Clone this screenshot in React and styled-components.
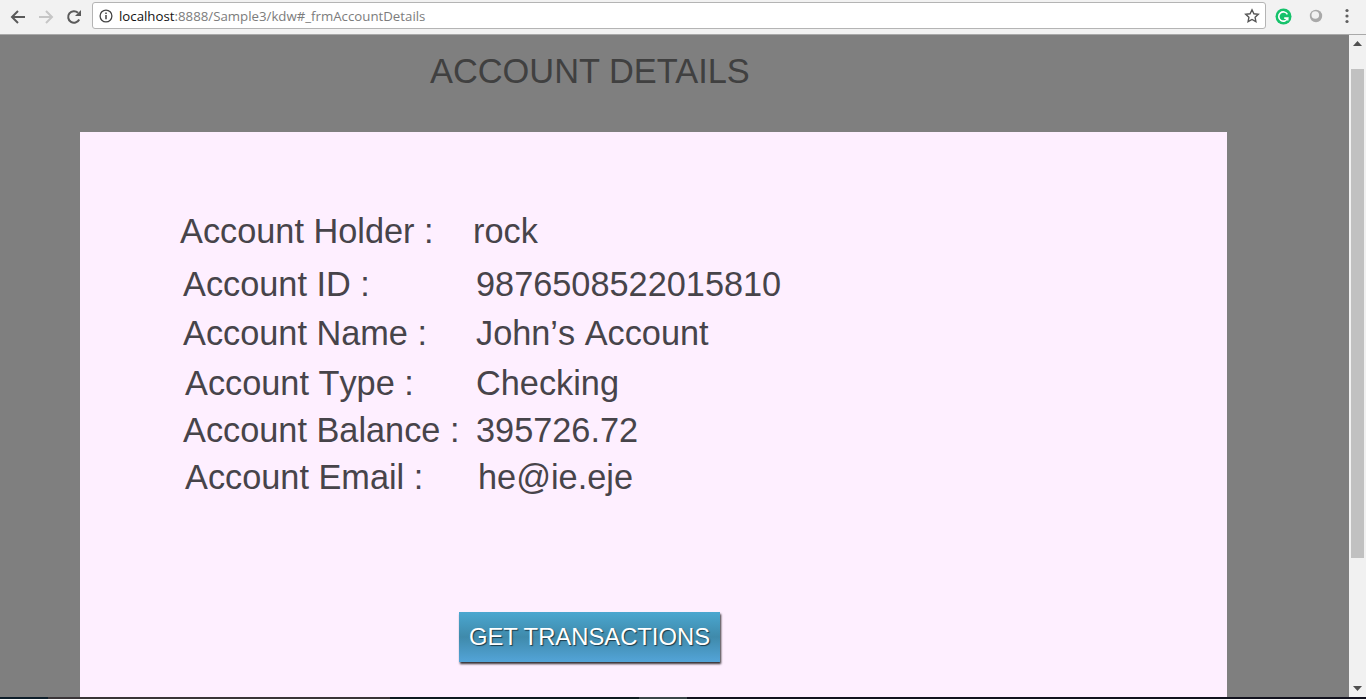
import React from "react";
import styled, { createGlobalStyle } from "styled-components";

const Global = createGlobalStyle`
  html, body { margin: 0; height: 100%; overflow: hidden; }
  body { font-family: "Liberation Sans", Arial, sans-serif; }
  #root { height: 100%; }
`;

const Screen = styled.div`
  width: 1366px;
  height: 699px;
  display: flex;
  flex-direction: column;
  overflow: hidden;
`;

const Toolbar = styled.header`
  height: 34px;
  flex: none;
  display: flex;
  align-items: center;
  background: #f2f2f2;
  border-bottom: 1px solid #a9a9a9;
  padding-left: 4px;
`;

const NavButton = styled.button`
  width: 28px;
  height: 28px;
  flex: none;
  padding: 0;
  border: 0;
  background: none;
  display: flex;
  align-items: center;
  justify-content: center;
`;

const Omnibox = styled.div`
  width: 1174px;
  height: 27px;
  box-sizing: border-box;
  margin-left: 4px;
  margin-top: -3px;
  display: flex;
  align-items: center;
  padding: 0 5px 0 6px;
  background: #fff;
  border: 1px solid #b4b4b4;
  border-radius: 3px;
  font: 13.25px "Open Sans", "Liberation Sans", sans-serif;
`;

const UrlHost = styled.span`
  color: #111;
  margin-left: 6px;
`;

const UrlRest = styled.span`
  color: #7c7c7c;
  flex: 1;
`;

const ExtSlot = styled.div`
  width: ${(p) => p.$w}px;
  flex: none;
  display: flex;
  justify-content: center;
  align-items: center;
  margin-top: -2px;
`;

const Body = styled.div`
  flex: 1;
  min-height: 0;
  display: flex;
`;

const Page = styled.main`
  flex: 1;
  min-width: 0;
  background: #7f7f7f;
  display: flex;
  flex-direction: column;
`;

const Title = styled.h1`
  margin: 0;
  height: 97px;
  box-sizing: border-box;
  padding: 17px 0 0 430px;
  font-size: 34.4px;
  line-height: 39px;
  font-weight: 400;
  color: #404040;
`;

const Card = styled.section`
  flex: 1;
  width: 1147px;
  margin-left: 80px;
  background: #feefff;
  display: flex;
  flex-direction: column;
  padding-top: 80px;
  box-sizing: border-box;
`;

const Row = styled.div`
  height: 38px;
  margin-top: ${(p) => p.$top}px;
  display: flex;
  font-size: 34.3px;
  font-kerning: none;
  line-height: 38px;
  color: #47444a;
  white-space: nowrap;
`;

const Label = styled.span`
  width: ${(p) => 293 - p.$x}px;
  margin-left: ${(p) => 100 + p.$x}px;
`;

const Value = styled.span`
  margin-left: ${(p) => p.$x}px;
`;

const ActionBar = styled.div`
  margin-top: 116px;
  padding-left: 379px;
`;

const ActionButton = styled.button`
  width: 261px;
  height: 50px;
  padding: 0;
  border: 0;
  background: linear-gradient(#4ba7d0 0%, #3f8aab 50%, #53a4d8 100%);
  color: #fff;
  font: 23.8px "Liberation Sans", Arial, sans-serif;
  text-shadow: 1px 1px 1px rgba(0, 0, 0, 0.6);
  box-shadow: 1px 2px 2px rgba(0, 0, 0, 0.8);
`;

const Scrollbar = styled.aside`
  width: 17px;
  flex: none;
  background: #f1f1f1;
  display: flex;
  flex-direction: column;
  align-items: center;
`;

const ScrollArrow = styled.div`
  height: 17px;
  flex: none;
  display: flex;
  align-items: center;
  justify-content: center;
`;

const ScrollThumb = styled.div`
  width: 13px;
  height: 489px;
  flex: none;
  margin-top: 17px;
  background: #c1c1c1;
`;

const ScrollTrack = styled.div`
  flex: 1;
`;

const Strip = styled.footer`
  height: 2px;
  flex: none;
  display: flex;
`;

const StripPart = styled.div`
  width: ${(p) => p.$w}px;
  background: ${(p) => p.$c};
`;

const rows = [
  { top: 0, lx: 0, vx: 0, label: "Account Holder :", value: "rock" },
  { top: 15, lx: 3, vx: 3, label: "Account ID :", value: "9876508522015810" },
  { top: 11, lx: 3, vx: 3, label: "Account Name :", value: "John’s Account" },
  { top: 12, lx: 5, vx: 3, label: "Account Type :", value: "Checking" },
  { top: 9, lx: 3, vx: 3, label: "Account Balance :", value: "395726.72" },
  { top: 9, lx: 5, vx: 5, label: "Account Email :", value: "he@ie.eje" },
];

const strip = [
  [48, "#0e1e2a"],
  [342, "#3a3538"],
  [249, "#0e1a20"],
  [48, "#3a4448"],
  [679, "#12121e"],
];

export default function App() {
  return (
    <Screen>
      <Global />
      <Toolbar>
        <NavButton aria-label="Back">
          <svg width="16" height="16" viewBox="0 0 16 16" fill="none" stroke="#5a5a5a" strokeWidth="2">
            <path d="M15 8H2M8 2 2 8l6 6" />
          </svg>
        </NavButton>
        <NavButton aria-label="Forward">
          <svg width="16" height="16" viewBox="0 0 16 16" fill="none" stroke="#c6c6c6" strokeWidth="2">
            <path d="M1 8h13M8 2l6 6-6 6" />
          </svg>
        </NavButton>
        <NavButton aria-label="Reload">
          <svg width="16" height="16" viewBox="0 0 16 16" fill="none">
            <path d="M13.2 10.5A5.8 5.8 0 1 1 12 3.8" stroke="#5a5a5a" strokeWidth="2" />
            <path d="M15 1v6H9z" fill="#5a5a5a" />
          </svg>
        </NavButton>
        <Omnibox>
          <svg width="14" height="14" viewBox="0 0 14 14" fill="none" stroke="#444" strokeWidth="1.3">
            <circle cx="7" cy="7" r="5.9" />
            <path d="M7 6v4.2M7 3.6v1.3" strokeWidth="1.5" />
          </svg>
          <UrlHost>localhost</UrlHost>
          <UrlRest>:8888/Sample3/kdw#_frmAccountDetails</UrlRest>
          <svg width="16" height="16" viewBox="0 0 16 16" fill="none" stroke="#555" strokeWidth="1.4">
            <path d="M8 1.8l1.9 4 4.4.5-3.2 3 .8 4.4L8 11.5l-3.9 2.2.8-4.4-3.2-3 4.4-.5z" />
          </svg>
        </Omnibox>
        <ExtSlot $w={35}>
          <svg width="17" height="17" viewBox="0 0 17 17" fill="none">
            <circle cx="8.5" cy="8.5" r="8" fill="#15c26b" />
            <path d="M12.4 6.3a4.6 4.6 0 1 0 .3 3.8H9.2" stroke="#fff" strokeWidth="1.6" />
            <path d="M12.8 10.2v2.2" stroke="#fff" strokeWidth="1.4" />
          </svg>
        </ExtSlot>
        <ExtSlot $w={29}>
          <svg width="14" height="14" viewBox="0 0 14 14">
            <circle cx="7" cy="7" r="6.2" fill="#a9a9a9" />
            <circle cx="6.3" cy="6" r="3.8" fill="#f1f1f1" />
          </svg>
        </ExtSlot>
        <ExtSlot $w={34}>
          <svg width="4" height="16" viewBox="0 0 4 16" fill="#5f5f5f">
            <circle cx="2" cy="2.5" r="1.6" />
            <circle cx="2" cy="8" r="1.6" />
            <circle cx="2" cy="13.5" r="1.6" />
          </svg>
        </ExtSlot>
      </Toolbar>
      <Body>
        <Page>
          <Title>ACCOUNT DETAILS</Title>
          <Card>
            {rows.map((r) => (
              <Row key={r.label} $top={r.top}>
                <Label $x={r.lx}>{r.label}</Label>
                <Value $x={r.vx}>{r.value}</Value>
              </Row>
            ))}
            <ActionBar>
              <ActionButton>GET TRANSACTIONS</ActionButton>
            </ActionBar>
          </Card>
        </Page>
        <Scrollbar>
          <ScrollArrow>
            <svg width="9" height="5" viewBox="0 0 9 5" fill="#505050"><path d="M4.5 0 9 5H0z" /></svg>
          </ScrollArrow>
          <ScrollThumb />
          <ScrollTrack />
          <ScrollArrow>
            <svg width="9" height="5" viewBox="0 0 9 5" fill="#505050"><path d="M0 0h9L4.5 5z" /></svg>
          </ScrollArrow>
        </Scrollbar>
      </Body>
      <Strip>
        {strip.map(([w, c]) => (
          <StripPart key={c} $w={w} $c={c} />
        ))}
      </Strip>
    </Screen>
  );
}
